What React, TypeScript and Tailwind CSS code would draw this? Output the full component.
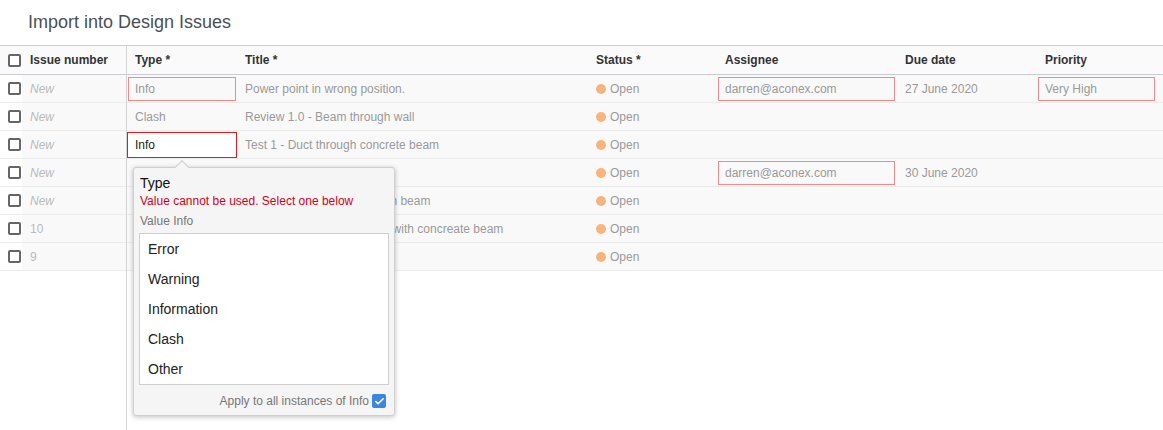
import { Check } from "lucide-react";

type Row = {
    num: string;
    isNew: boolean;
    type?: string;
    typeInvalid?: boolean;
    typeActive?: boolean;
    title: string;
    assignee?: string;
    due?: string;
    priority?: string;
};

const rows: Row[] = [
    { num: "New", isNew: true, type: "Info", typeInvalid: true, title: "Power point in wrong position.", assignee: "darren@aconex.com", due: "27 June 2020", priority: "Very High" },
    { num: "New", isNew: true, type: "Clash", title: "Review 1.0 - Beam through wall" },
    { num: "New", isNew: true, type: "Info", typeActive: true, title: "Test 1 - Duct through concrete beam" },
    { num: "New", isNew: true, title: "Wall offset", assignee: "darren@aconex.com", due: "30 June 2020" },
    { num: "New", isNew: true, title: "Test 2 - Pipe clash with main beam" },
    { num: "10", isNew: false, title: "Test 3 - Water pipe clashes with concreate beam" },
    { num: "9", isNew: false, title: "Door swing" },
];

const options = ["Error", "Warning", "Information", "Clash", "Other"];

const Box = ({ children, w }: { children: React.ReactNode; w: string }) => (
    <div className={`${w} h-[24px] flex items-center px-[6px] border border-[#f28a8c] text-[#999]`}>
        {children}
    </div>
);

const CheckBox = () => (
    <div className="w-[13px] h-[13px] rounded-[2px] border-2 border-[#666] bg-white shrink-0" />
);

export default function App() {
    return (
        <div
            className="relative w-[1163px] h-[430px] bg-white flex flex-col text-[12px] overflow-hidden"
            style={{ fontFamily: '"Liberation Sans", Arial, sans-serif' }}
        >
            {/* Title */}
            <div className="h-[45px] pl-[28px] pt-[9px] text-[18px] text-[#4a4f57]">
                Import into Design Issues
            </div>

            <div className="flex flex-1">
                {/* first column */}
                <div className="w-[127px] border-r border-[#d4d4d4] flex flex-col">
                    <div className="h-[30px] border-t border-b border-[#c8ccd0] bg-[#fafafa] flex items-center pl-[8px] gap-[9px]">
                        <CheckBox />
                        <span className="font-bold text-[#333]">Issue number</span>
                    </div>
                    {rows.map((r, i) => (
                        <div key={i} className="h-[28px] border-b border-[#ececec] flex items-center">
                            <div className="w-[22px] h-full bg-white flex items-center pl-[8px]">
                                <CheckBox />
                            </div>
                            <div className={`flex-1 h-full bg-[#f9f9f9] flex items-center pl-[8px] text-[#bbb] ${r.isNew ? "italic" : ""}`}>
                                {r.num}
                            </div>
                        </div>
                    ))}
                </div>

                {/* rest of table */}
                <div className="flex-1 flex flex-col">
                    <div className="h-[30px] border-t border-b border-[#c8ccd0] bg-[#fafafa] flex items-center font-bold text-[#333]">
                        <div className="w-[110px] pl-[8px]">Type *</div>
                        <div className="w-[351px] pl-[8px]">Title *</div>
                        <div className="w-[129px] pl-[8px]">Status *</div>
                        <div className="w-[180px] pl-[8px]">Assignee</div>
                        <div className="w-[140px] pl-[8px]">Due date</div>
                        <div className="flex-1 pl-[8px]">Priority</div>
                    </div>
                    {rows.map((r, i) => (
                        <div key={i} className="h-[28px] border-b border-[#ececec] bg-[#f9f9f9] flex items-center text-[#999]">
                            <div className="w-[110px] h-full flex items-center">
                                {r.typeActive ? (
                                    <div className="w-[110px] h-[26px] flex items-center pl-[7px] border border-[#e8191c] bg-white text-[#222]">
                                        {r.type}
                                    </div>
                                ) : r.typeInvalid ? (
                                    <div className="ml-[1px]">
                                        <Box w="w-[108px]">{r.type}</Box>
                                    </div>
                                ) : (
                                    <span className="pl-[8px]">{r.type}</span>
                                )}
                            </div>
                            <div className="w-[351px] pl-[8px] whitespace-nowrap overflow-hidden">{r.title}</div>
                            <div className="w-[129px] pl-[8px] flex items-center gap-[4px]">
                                <span className="w-[10px] h-[10px] rounded-full bg-[#f9b47c]" />
                                Open
                            </div>
                            <div className="w-[180px] pl-[1px]">
                                {r.assignee && <Box w="w-[177px]">{r.assignee}</Box>}
                            </div>
                            <div className="w-[140px] pl-[8px]">{r.due}</div>
                            <div className="flex-1 pl-[1px] pr-[8px]">
                                {r.priority && <Box w="w-full">{r.priority}</Box>}
                            </div>
                        </div>
                    ))}
                </div>
            </div>

            {/* popover */}
            <div className="absolute left-[133px] top-[167px] w-[262px] h-[249px] bg-[#f5f5f5] border border-[#cfcfcf] rounded-[3px] shadow-[0_1px_5px_rgba(0,0,0,0.25)] flex flex-col px-[5px]">
                {/* arrow */}
                <div className="absolute -top-[6px] left-[43px] w-[10px] h-[10px] rotate-45 bg-[#f5f5f5] border-l border-t border-[#cfcfcf]" />
                <div className="pl-[1px] pt-[7px] text-[14px] leading-[17px] text-[#111]">Type</div>
                <div className="pl-[1px] mt-[1px] text-[12px] leading-[17px] text-[#d0021b]">Value cannot be used. Select one below</div>
                <div className="pl-[1px] mt-[3px] text-[12px] leading-[17px] text-[#777]">Value Info</div>
                <div className="mt-[3px] h-[152px] border border-[#cfcfcf] bg-white">
                    {options.map((o) => (
                        <div key={o} className="h-[30px] flex items-center pl-[8px] text-[14px] text-[#222]">
                            {o}
                        </div>
                    ))}
                </div>
                <div className="flex items-center justify-end gap-[3px] mt-[7px] pr-[3px] text-[#777]">
                    Apply to all instances of Info
                    <span className="w-[14px] h-[14px] rounded-[2px] bg-[#3b86e0] flex items-center justify-center">
                        <Check className="w-[11px] h-[11px] text-white" strokeWidth={3.5} />
                    </span>
                </div>
            </div>
        </div>
    );
}
